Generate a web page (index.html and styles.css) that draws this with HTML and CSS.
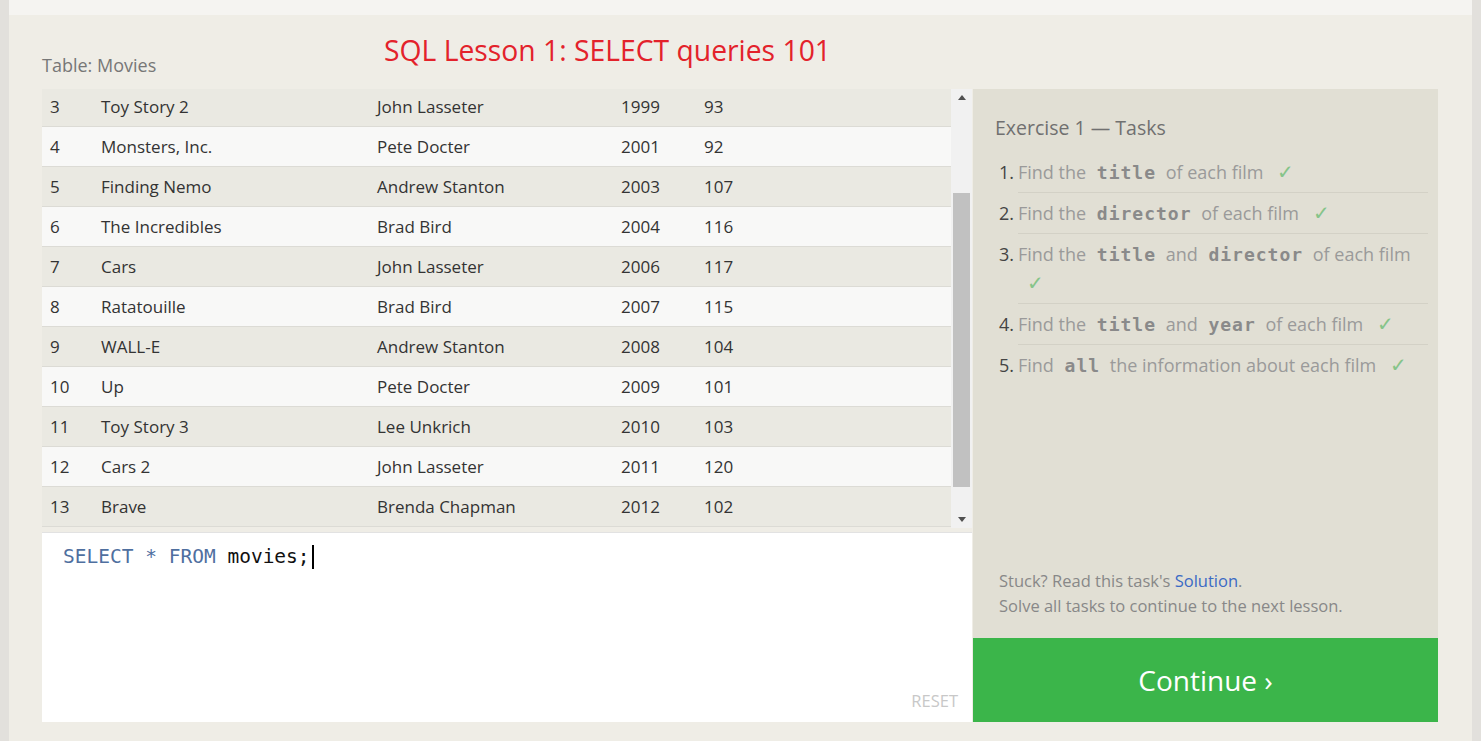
FILE: index.html
```html
<!DOCTYPE html>
<html lang="en">
<head>
<meta charset="utf-8">
<title>SQL Lesson 1: SELECT queries 101</title>
<link rel="stylesheet" href="styles.css">
</head>
<body>
<div class="frame">
  <div class="edge"></div>
  <div class="page">
    <div class="topbar"></div>
    <main class="main">
      <header class="head">
        <div class="table-label">Table: Movies</div>
        <h1 class="title">SQL Lesson 1: SELECT queries 101</h1>
      </header>
      <div class="workspace">
        <section class="left">
          <div class="table-wrap">
            <div class="rows">
              <div class="rows-inner">
                <div class="row odd"><span>3</span><span>Toy Story 2</span><span>John Lasseter</span><span>1999</span><span>93</span></div>
                <div class="row even"><span>4</span><span>Monsters, Inc.</span><span>Pete Docter</span><span>2001</span><span>92</span></div>
                <div class="row odd"><span>5</span><span>Finding Nemo</span><span>Andrew Stanton</span><span>2003</span><span>107</span></div>
                <div class="row even"><span>6</span><span>The Incredibles</span><span>Brad Bird</span><span>2004</span><span>116</span></div>
                <div class="row odd"><span>7</span><span>Cars</span><span>John Lasseter</span><span>2006</span><span>117</span></div>
                <div class="row even"><span>8</span><span>Ratatouille</span><span>Brad Bird</span><span>2007</span><span>115</span></div>
                <div class="row odd"><span>9</span><span>WALL-E</span><span>Andrew Stanton</span><span>2008</span><span>104</span></div>
                <div class="row even"><span>10</span><span>Up</span><span>Pete Docter</span><span>2009</span><span>101</span></div>
                <div class="row odd"><span>11</span><span>Toy Story 3</span><span>Lee Unkrich</span><span>2010</span><span>103</span></div>
                <div class="row even"><span>12</span><span>Cars 2</span><span>John Lasseter</span><span>2011</span><span>120</span></div>
                <div class="row odd"><span>13</span><span>Brave</span><span>Brenda Chapman</span><span>2012</span><span>102</span></div>
              </div>
            </div>
            <div class="scrollbar">
              <div class="sb-btn"><svg width="8" height="5" viewBox="0 0 8 5"><path d="M0 5 L4 0 L8 5 Z" fill="#505050"/></svg></div>
              <div class="sb-gap"></div>
              <div class="sb-thumb"></div>
              <div class="sb-rest"></div>
              <div class="sb-btn"><svg width="8" height="5" viewBox="0 0 8 5"><path d="M0 0 L4 5 L8 0 Z" fill="#505050"/></svg></div>
            </div>
          </div>
          <div class="editor">
            <div class="code"><span class="kw">SELECT</span> <span class="op">*</span> <span class="kw">FROM</span> movies;<span class="caret"></span></div>
            <div class="reset">RESET</div>
          </div>
        </section>
        <aside class="panel">
          <h2 class="ex-title">Exercise 1 — Tasks</h2>
          <ol class="tasks">
            <li class="task"><span class="num">1.</span><span class="body">Find the <code>title</code> of each film <span class="check">✓</span></span></li>
            <li class="task"><span class="num">2.</span><span class="body">Find the <code>director</code> of each film <span class="check">✓</span></span></li>
            <li class="task"><span class="num">3.</span><span class="body">Find the <code>title</code> and <code>director</code> of each film <span class="check">✓</span></span></li>
            <li class="task"><span class="num">4.</span><span class="body">Find the <code>title</code> and <code>year</code> of each film <span class="check">✓</span></span></li>
            <li class="task"><span class="num">5.</span><span class="body">Find <code>all</code> the information about each film <span class="check">✓</span></span></li>
          </ol>
          <div class="stuck">
            <div>Stuck? Read this task's <a class="solution" href="#">Solution</a>.</div>
            <div>Solve all tasks to continue to the next lesson.</div>
          </div>
          <div class="continue">Continue ›</div>
        </aside>
      </div>
    </main>
  </div>
  <div class="edge"></div>
</div>
</body>
</html>
```

FILE: styles.css
```css
* { box-sizing: border-box; }
html, body { margin: 0; padding: 0; height: 100%; }
body {
  font-family: "Open Sans", "Noto Sans", sans-serif;
  background: #efede6;
  color: #333;
  overflow: hidden;
}
.frame { display: flex; height: 741px; }
.edge { width: 9px; background: #e2e0dc; flex: none; }
.page { flex: 1; display: flex; flex-direction: column; min-width: 0; }
.topbar { height: 15px; background: #f5f4f1; flex: none; }
.main { flex: 1; background: #efede6; padding: 0 34px 0 33px; }

.head { display: flex; align-items: flex-start; height: 74px; padding-top: 17px; }
.table-label { font-size: 18px; line-height: 24px; color: #777; margin-top: 21px; width: 116px; white-space: nowrap; }
.title { margin: 0 0 0 226px; font-weight: normal; font-size: 28.3px; line-height: 36px; color: #e3222b; white-space: nowrap; }

.workspace { display: flex; }
.left { width: 930px; display: flex; flex-direction: column; }
.table-wrap { height: 439px; display: flex; }
.rows { flex: 1; overflow: hidden; }
.rows-inner { margin-top: -2px; }
.row {
  display: grid;
  grid-template-columns: 51px 276px 244px 83px 1fr;
  padding-left: 8px;
  height: 40px;
  align-items: center;
  font-size: 17px;
  color: #333;
  border-bottom: 1px solid #dcdbd5;
}
.row.odd { background: #eae9e2; }
.row.even { background: #f8f8f7; }
.scrollbar { width: 21px; background: #f1f1f1; display: flex; flex-direction: column; padding: 0 2px; }
.sb-btn { height: 17px; display: flex; align-items: center; justify-content: center; }
.sb-gap { height: 87px; }
.sb-thumb { height: 294px; background: #c1c1c1; }
.sb-rest { flex: 1; }

.editor {
  margin-top: 4px;
  height: 190px;
  background: #fff;
  border-top: 1px solid #e2e2e2;
  display: flex;
  flex-direction: column;
  padding: 12px 14px 9px 21px;
}
.code { font-family: "DejaVu Sans Mono", monospace; font-size: 19.5px; line-height: 24px; color: #111; white-space: pre; }
.kw { color: #4f6f9f; }
.op { color: #4f6f9f; }
.caret { display: inline-block; width: 2px; height: 24px; background: #000; margin-left: 2px; vertical-align: top; }
.reset { margin-top: auto; align-self: flex-end; font-size: 16.5px; line-height: 24px; color: #c8c8c8; }

.panel {
  width: 465px;
  margin-left: 1px;
  background: #e1dfd4;
  display: flex;
  flex-direction: column;
}
.ex-title { margin: 26px 0 0 22px; font-weight: normal; font-size: 19.5px; line-height: 26px; color: #707070; }
.tasks { list-style: none; margin: 11px 10px 0 26px; padding: 0; }
.task { display: flex; font-size: 18px; line-height: 29px; }
.num { width: 19px; flex: none; color: #444; padding-top: 6px; }
.body { flex: 1; color: #9a9a9a; padding: 6px 0 5px; border-bottom: 1px solid #d3d1c6; }
.task:last-child .body { border-bottom: none; }
code { font-family: "DejaVu Sans Mono", monospace; font-weight: bold; font-size: 18px; line-height: 1; color: #8a8a8a; letter-spacing: 1px; padding: 0 5px 0 6px; }
.check { color: #86c489; margin-left: 9px; display: inline-block; font-size: 20px; line-height: 1; }

.stuck { margin-top: auto; padding: 0 0 20px 26px; font-size: 16.5px; line-height: 25px; color: #888; }
.solution { color: #3b6ac4; text-decoration: none; }
.continue {
  height: 84px;
  background: #3bb54a;
  color: #fff;
  font-size: 28px;
  display: flex;
  align-items: center;
  justify-content: center;
}
```
